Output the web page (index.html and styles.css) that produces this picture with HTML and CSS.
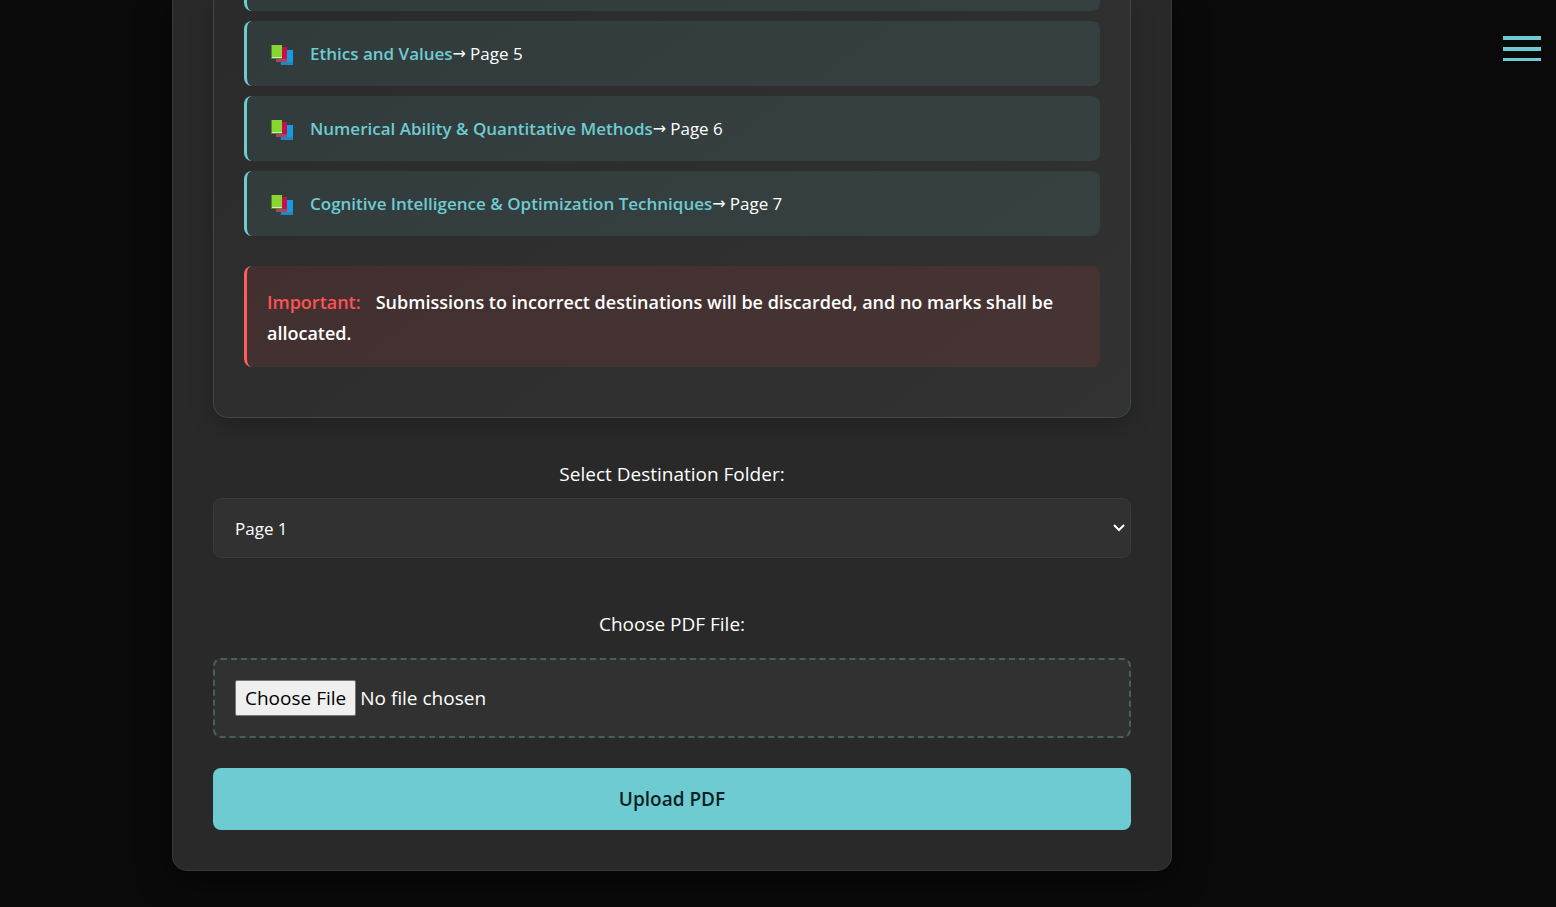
FILE: index.html
```html
<!DOCTYPE html>
<html lang="en">
<head>
<meta charset="utf-8">
<meta name="viewport" content="width=device-width, initial-scale=1">
<title>Upload PDF</title>
<link rel="stylesheet" href="styles.css">
</head>
<body>
<svg class="sprite" aria-hidden="true">
  <symbol id="books" viewBox="0 0 24 22">
    <path fill="#0669a8" d="M10 19h13v2H11z"/>
    <path fill="#139be4" d="M12 6h11v13H12z"/>
    <path fill="#2784bd" d="M11 18h12v3H11z"/>
    <path fill="#8c0d3b" d="M6 4h3v14H6z"/>
    <path fill="#c90f49" d="M8 3h9v12H8z"/>
    <path fill="#aa4561" d="M6 15h11v3H6z"/>
    <path fill="#4e8d25" d="M1 1h2v14H1z"/>
    <path fill="#86d72f" d="M2 1h10v12H2z"/>
    <path fill="#d8e6cd" d="M2 13h10v1H2z"/>
    <path fill="#4e8d25" d="M1 14h11v1H1z"/>
  </symbol>
</svg>
<button class="menu" type="button" aria-label="Menu"><span class="bar"></span><span class="bar"></span><span class="bar"></span></button>
<main class="page">
  <div class="card">
    <section class="panel">
      <ul class="subjects">
        <li class="subject subject-tail"></li>
        <li class="subject"><svg class="books" aria-hidden="true"><use href="#books"/></svg><strong>Ethics and Values</strong><span class="arrow">→</span><span>Page 5</span></li>
        <li class="subject"><svg class="books" aria-hidden="true"><use href="#books"/></svg><strong>Numerical Ability &amp; Quantitative Methods</strong><span class="arrow">→</span><span>Page 6</span></li>
        <li class="subject"><svg class="books" aria-hidden="true"><use href="#books"/></svg><strong>Cognitive Intelligence &amp; Optimization Techniques</strong><span class="arrow">→</span><span>Page 7</span></li>
      </ul>
      <p class="notice"><strong class="notice-label">Important:</strong>Submissions to incorrect destinations will be discarded, and no marks shall be allocated.</p>
    </section>
    <form class="form">
      <label class="label" for="folder">Select Destination Folder:</label>
      <div class="select-box">
        <select class="select" id="folder"><option>Page 1</option><option>Page 2</option><option>Page 3</option><option>Page 4</option><option>Page 5</option><option>Page 6</option><option>Page 7</option></select>
        <svg class="chevron" viewBox="0 0 12 8" aria-hidden="true"><path d="M1 1l5 5 5-5" fill="none" stroke="#fff" stroke-width="2"/></svg>
      </div>
      <label class="label label-file" for="file">Choose PDF File:</label>
      <input class="file" id="file" type="file" accept="application/pdf">
      <button class="upload" type="button">Upload PDF</button>
    </form>
  </div>
</main>
</body>
</html>
```
FILE: styles.css
```css
* { box-sizing: border-box; }
body {
  margin: 0;
  background: #0a0a0a;
  color: #fff;
  font-family: "Segoe UI", "Open Sans", "Noto Sans", sans-serif;
  font-size: 17px;
}
.sprite { display: none; }
.page { padding: 0 212px 36px 0; }
.card {
  max-width: 1000px;
  margin: 0 auto;
  padding: 0 40px 40px;
  background: #292929;
  border: 1px solid #343838;
  border-top: 0;
  border-radius: 0 0 15px 15px;
  box-shadow: 0 8px 32px rgba(0, 0, 0, 0.5);
}
.panel {
  padding: 0 30px 50px;
  background: linear-gradient(145deg, #2b2b2b, #323232);
  border: 1px solid #3c4849;
  border-top: 0;
  border-radius: 0 0 15px 15px;
  box-shadow: 0 8px 24px rgba(0, 0, 0, 0.2);
}
.subjects {
  display: grid;
  gap: 10px;
  margin: 0;
  padding: 0;
  list-style: none;
}
.subject {
  display: flex;
  align-items: center;
  min-height: 65px;
  padding: 0 23px 1px;
  background: rgba(110, 203, 209, 0.1);
  border-left: 3px solid #6ecbd1;
  border-radius: 8px;
}
.subject-tail {
  min-height: 11px;
  border-radius: 0 0 8px 8px;
}
.subject strong { color: #6ecbd1; font-weight: 600; }
.books { width: 24px; height: 22px; margin: 3px 16px 0 0; }
.arrow { margin-right: 4px; font-family: "Noto Sans", "DejaVu Sans", sans-serif; font-size: 16px; }
.notice {
  margin: 30px 0 0;
  padding: 21px 20px 18px;
  background: rgba(255, 82, 82, 0.1);
  border-left: 3px solid #ff5c5c;
  border-radius: 8px;
  font-size: 18px;
  font-weight: 600;
  line-height: 31px;
}
.notice-label { margin-right: 15px; color: #ff5252; font-weight: 600; }
.form {
  display: grid;
  padding-top: 42px;
}
.label {
  margin-bottom: 10px;
  font-size: 19px;
  line-height: 28px;
  text-align: center;
}
.label-file { margin: 52px 0 20px; }
.select-box {
  display: grid;
  align-items: center;
}
.select,
.chevron { grid-area: 1 / 1; }
.select {
  width: 100%;
  height: 60px;
  padding: 0 30px 0 21px;
  appearance: none;
  background-color: #313131;
  border: 1px solid #3b3b3b;
  border-radius: 8px;
  color: #fff;
  font: inherit;
}
.chevron {
  justify-self: end;
  width: 12px;
  height: 8px;
  margin-right: 6px;
  pointer-events: none;
}
.file {
  width: 100%;
  height: 80px;
  padding: 20px;
  background: #313131;
  border: 2px dashed #47605f;
  border-radius: 8px;
  font: inherit;
  font-size: 19px;
}
.file::file-selector-button {
  height: 36px;
  padding: 0 9px;
  background: #efefef;
  border: 1px solid #767676;
  border-radius: 2px;
  color: #000;
  font: inherit;
}
.upload {
  height: 62px;
  margin-top: 30px;
  background: #6ecbd1;
  border: 0;
  border-radius: 8px;
  color: #0d1f22;
  font: inherit;
  font-size: 19px;
  font-weight: 600;
}
.menu {
  position: fixed;
  top: 36px;
  right: 15px;
  display: grid;
  gap: 7px;
  width: 38px;
  padding: 0;
  background: none;
  border: 0;
}
.bar { height: 4px; background: #6ecbd1; }
.bar:last-child { height: 3px; }
```
